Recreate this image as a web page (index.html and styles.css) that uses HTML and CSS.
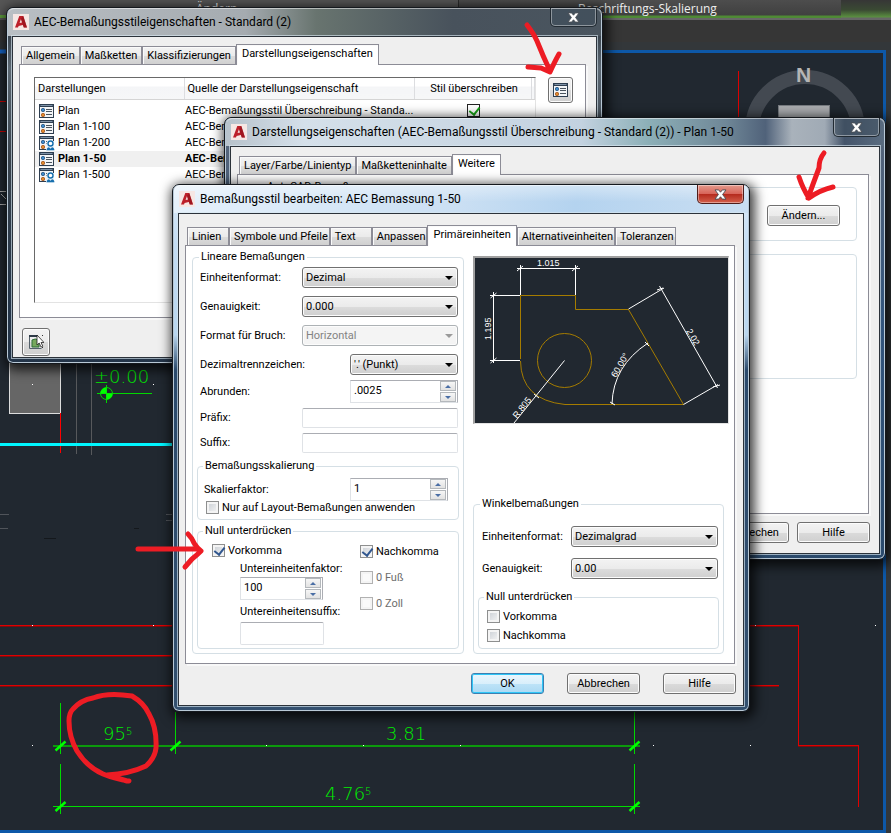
FILE: index.html
```html
<!DOCTYPE html>
<html lang="de">
<head>
<meta charset="utf-8">
<title>AEC-Bemaßungsstileigenschaften</title>
<link rel="stylesheet" href="styles.css">
</head>
<body>
<svg class="defs" width="0" height="0" aria-hidden="true">
  <symbol id="app" viewBox="0 0 16 16"><rect width="16" height="16" fill="#f6e7e4"/><path d="M2 13.500 6.300 2h4L14 13.500h-3.200l-1-2.600L5.600 12 5 13.500zM6.600 9l2.400-.6L8 5z" fill="#bd1f2a"/><path d="M8 5 10.300 2 14 13.500h-3.200z" fill="#8c1119" opacity=".6"/></symbol>
  <symbol id="close" viewBox="0 0 14 12"><path d="M1 1h4l2 2.500L9 1h4L9.300 6 13 11H9L7 8.500 5 11H1l3.700-5z" fill="#fff" stroke="#4a5057"/></symbol>
  <symbol id="list" viewBox="0 0 16 16"><rect x=".5" y="1.500" width="14" height="13" fill="#f3f5f7" stroke="#2e3e50"/><path d="M0 1h15v3H0z" fill="#2e3e50"/><path d="M1.500 2.500h12" stroke="#7f93a8"/><rect x="2.500" y="5.500" width="3" height="3" rx="1" fill="#3d8bcb" stroke="#1e4d7c"/><rect x="2.500" y="10.500" width="3" height="3" rx="1" fill="#e28a2c" stroke="#a04e13"/><path d="M7 6.500h6M7 8.500h6M7 11.500h6" stroke="#4a545e"/></symbol>
  <symbol id="user" viewBox="0 0 16 16"><use href="#list"/><path d="M7 16V11l1-5h7v10z" fill="#e9f2f8"/><circle cx="11.500" cy="8.500" r="2.500" fill="#fff" stroke="#176fae" stroke-width="1.400"/><path d="M7.500 15.300q.5-3 2.500-3l1.500 1.500 1.500-1.500q2 0 2.500 3z" fill="#176fae"/></symbol>
  <symbol id="pick" viewBox="0 0 16 16"><path d="M1.500 1v13.500h12" fill="none" stroke="#53606a"/><path d="M1 1h9v2H1z" fill="#2e3b48"/><path d="M4 6q3-2 7 0v7H4z" fill="#77a85d" stroke="#2f6f38"/><path d="M9 1v10l2.200-2 1.800 4 1.800-.8L13 8.500h3z" fill="#fff" stroke="#222" stroke-width=".8"/><path d="M14.500 1v2M14.500 13v2" stroke="#333" stroke-dasharray="1 1"/></symbol>
</svg>

<main class="desktop">
  <div class="ribbon"><span class="ribbon-left">Ändern</span><span class="ribbon-right">Beschriftungs-Skalierung</span></div>
  <div class="ribbon-gap"></div>
  <div class="canvas-frame"></div>

  <svg class="drawing" width="100%" height="100%" aria-label="Zeichnung">
    <path d="M0 15h6v3H0z" fill="#5c9a3c"/><path d="M0 51.500h6" stroke="#1565c8" stroke-width="4"/>
    <path d="M0 101.500h6M0 131.500h6" stroke="#c00"/>
    <path d="M738.500 71v50" stroke="#d00"/>
    <path d="M0 191.500h6M0 204.500h6M1 194l5 5" stroke="#aaa" fill="none"/>
    <circle cx="805" cy="130" r="53" fill="none" stroke="#434951" stroke-width="14"/>
    <rect x="778.500" y="105.500" width="51" height="51" fill="#a9abae" stroke="#777b80"/>
    <text class="compass" x="796" y="82">N</text>
    <rect x="9.500" y="330" width="51" height="83.500" fill="#666" stroke="#ddd"/>
    <path d="M60.500 413v40" stroke="#f00"/>
    <path d="M76.500 363v91M91.500 363v92" stroke="#57595c"/>
    <path d="M0 444.500h172" stroke="#00f6ff" stroke-width="3"/>
    <g stroke="#00d800" fill="none"><path d="M97 393.500h55"/><circle cx="106.500" cy="393.500" r="6"/><path d="M106.500 385v18"/></g>
    <path d="M106.500 393.500v-6a6 6 0 0 0-6 6zM106.500 393.500v6a6 6 0 0 0 6-6z" fill="#0f0"/>
    <text class="cad" x="94" y="383">±0.00</text>
    <path d="M0 514.500h9M0 528.500h8M166 514.500h6M166 520.500h6" stroke="#50545a"/>
    <path d="M44 538.500h12M134 528.500h5" stroke="#14181c"/>
    <g fill="#e00000"><rect x="0" y="625" width="799" height="1"/><rect x="0" y="655" width="172" height="1"/><rect x="0" y="685" width="779" height="1"/><rect x="798" y="625" width="1" height="121"/><rect x="798" y="745" width="61" height="1"/><rect x="858" y="745" width="1" height="62"/></g>
    <g fill="#7a0c10"><rect x="0" y="626" width="798" height="1"/><rect x="0" y="656" width="172" height="1"/><rect x="0" y="686" width="779" height="1"/><rect x="798" y="746" width="60" height="1"/></g>
    <path d="M53 746h587" stroke="#0c9a0c" stroke-width="2"/>
    <path d="M53 806.500h587" stroke="#0d0"/>
    <path d="M60.500 703v51M175.500 712v42M634.500 712v42M60.500 764v50M634.500 764v50" stroke="#00d800"/>
    <path d="m55.500 750.500 10-9M170.500 750.500l10-9M629.500 750.500l10-9M55.500 811l10-9M629.500 811l10-9" stroke="#0f0" stroke-width="2.500"/>
    <text class="cad" x="103" y="740">95<tspan class="sup" dy="-5">5</tspan></text>
    <text class="cad" x="386" y="740">3.81</text>
    <text class="cad" x="325" y="800">4.76<tspan class="sup" dy="-5">5</tspan></text>
    <path d="M32 384.500h1M153 384.500h1M32 625.500h1M153 625.500h1M755 625.500h1M875 625.500h1M32 745.500h1M266 745.500h1M363 745.500h1M460 745.500h1M653 745.500h1M750 745.500h1" stroke="#fff"/>
  </svg>

  <section class="window win-style" aria-label="AEC-Bemaßungsstileigenschaften">
    <header class="titlebar dark"><svg class="app"><use href="#app"/></svg><h2>AEC-Bemaßungsstileigenschaften - Standard (2)</h2><button class="close" aria-label="Schließen"><svg><use href="#close"/></svg></button></header>
    <div class="client">
      <nav class="tabs"><button>Allgemein</button><button>Maßketten</button><button>Klassifizierungen</button><button class="on">Darstellungseigenschaften</button></nav>
      <div class="panel style-panel">
        <div class="listbox">
          <table>
            <thead><tr><th class="c1">Darstellungen</th><th class="c2">Quelle der Darstellungseigenschaft</th><th class="c3">Stil überschreiben</th><th></th></tr></thead>
            <tbody>
              <tr><td><svg class="ico"><use href="#list"/></svg>Plan</td><td>AEC-Bemaßungsstil Überschreibung - Standa...</td><td class="mid"><input class="green" type="checkbox" checked aria-label="Plan überschreiben"></td><td></td></tr>
              <tr><td><svg class="ico"><use href="#list"/></svg>Plan 1-100</td><td>AEC-Bemaßungsstil Überschreibung - Standa...</td><td></td><td></td></tr>
              <tr><td><svg class="ico"><use href="#user"/></svg>Plan 1-200</td><td>AEC-Bemaßungsstil Überschreibung - Standa...</td><td></td><td></td></tr>
              <tr class="current"><td><svg class="ico"><use href="#list"/></svg>Plan 1-50</td><td>AEC-Bemaßungsstil</td><td></td><td></td></tr>
              <tr><td><svg class="ico"><use href="#user"/></svg>Plan 1-500</td><td>AEC-Bemaßungsstil Überschreibung - Standa...</td><td></td><td></td></tr>
            </tbody>
          </table>
        </div>
        <button class="btn tool" aria-label="Darstellungseigenschaften bearbeiten"><svg class="ico"><use href="#list"/></svg></button>
      </div>
      <div class="footer-left"><button class="btn tool" aria-label="Objekt wählen"><svg class="ico"><use href="#pick"/></svg></button></div>
    </div>
  </section>

  <section class="window win-display" aria-label="Darstellungseigenschaften">
    <header class="titlebar mixed"><svg class="app"><use href="#app"/></svg><h2>Darstellungseigenschaften (AEC-Bemaßungsstil Überschreibung - Standard (2)) - Plan 1-50</h2><button class="close" aria-label="Schließen"><svg><use href="#close"/></svg></button></header>
    <div class="client">
      <nav class="tabs"><button>Layer/Farbe/Linientyp</button><button>Maßketteninhalte</button><button class="on">Weitere</button></nav>
      <div class="panel display-panel">
        <fieldset class="change"><legend>AutoCAD-Bemaßung</legend><button class="btn">Ändern...</button></fieldset>
        <fieldset class="plain"></fieldset>
      </div>
      <div class="footer"><button class="btn">Abbrechen</button><button class="btn">Hilfe</button></div>
    </div>
  </section>

  <section class="window win-edit" aria-label="Bemaßungsstil bearbeiten">
    <header class="titlebar light"><svg class="app"><use href="#app"/></svg><h2>Bemaßungsstil bearbeiten: AEC Bemassung 1-50</h2><button class="close red" aria-label="Schließen"><svg><use href="#close"/></svg></button></header>
    <div class="client">
      <nav class="tabs snug"><button>Linien</button><button>Symbole und Pfeile</button><button>Text</button><button>Anpassen</button><button class="on">Primäreinheiten</button><button>Alternativeinheiten</button><button>Toleranzen</button></nav>
      <div class="panel edit-panel">
        <fieldset class="linear">
          <legend>Lineare Bemaßungen</legend>
          <div class="row"><label for="fmt">Einheitenformat:</label><span class="combo"><select id="fmt"><option>Dezimal</option></select></span></div>
          <div class="row"><label for="prec">Genauigkeit:</label><span class="combo"><select id="prec"><option>0.000</option></select></span></div>
          <div class="row"><label for="frac">Format für Bruch:</label><span class="combo off"><select id="frac" disabled><option>Horizontal</option></select></span></div>
          <div class="row tight"><label for="sep">Dezimaltrennzeichen:</label><span class="combo narrow"><select id="sep"><option>'.' (Punkt)</option></select></span></div>
          <div class="row tight"><label for="rnd">Abrunden:</label><span class="spin narrow"><input id="rnd" value=".0025"><button class="up" aria-label="Mehr"></button><button class="down" aria-label="Weniger"></button></span></div>
          <div class="row tight"><label for="pre">Präfix:</label><input class="text" id="pre"></div>
          <div class="row tight"><label for="suf">Suffix:</label><input class="text" id="suf"></div>
          <fieldset class="scale">
            <legend>Bemaßungsskalierung</legend>
            <div class="scale-row"><label for="sc">Skalierfaktor:</label><span class="spin"><input id="sc" value="1"><button class="up" aria-label="Mehr"></button><button class="down" aria-label="Weniger"></button></span></div>
            <label class="check"><input type="checkbox">Nur auf Layout-Bemaßungen anwenden</label>
          </fieldset>
          <fieldset class="zero">
            <legend>Null unterdrücken</legend>
            <div class="zero-left">
              <label class="check"><input type="checkbox" checked>Vorkomma</label>
              <div class="sub">
                <label for="uf">Untereinheitenfaktor:</label>
                <span class="spin"><input id="uf" value="100"><button class="up" aria-label="Mehr"></button><button class="down" aria-label="Weniger"></button></span>
                <label class="suffix" for="us">Untereinheitensuffix:</label>
                <input class="text tall" id="us">
              </div>
            </div>
            <div class="zero-right">
              <label class="check"><input type="checkbox" checked>Nachkomma</label>
              <label class="check off"><input type="checkbox" disabled>0 Fuß</label>
              <label class="check off"><input type="checkbox" disabled>0 Zoll</label>
            </div>
          </fieldset>
        </fieldset>
        <div class="right-col">
          <svg class="preview" viewBox="475 258 253 165" aria-label="Vorschau">
            <g fill="none" stroke="#a57c00"><path d="M520.500 359V295.500h55V309.500h53L683.500 404.500H565Q521 400 520.500 361"/><circle cx="564.500" cy="360.500" r="27"/></g>
            <g fill="none" stroke="#fff"><path d="M520.500 295V265M575.500 295V265M517 268.500h63M572 271l6-5M517 271l6-5M520 295.500H490M520 360.500H490M493.500 292v71M490.500 298l6-5M490.500 363l6-5M628.500 309 664 288M683.500 404.500 718 384.500M659.500 286 717.500 388M657 290l6-2M713 387l7-2M564.500 360.500 514 423M612 404q1-38 36-61M645 342l4 4M610 402l5 3M534 394l5 4"/></g>
            <g class="dim"><text x="537" y="266">1.015</text><text transform="translate(491 340) rotate(-90)">1.195</text><text transform="translate(686 331) rotate(60)">2.02</text><text transform="translate(616 378) rotate(-60)">60.00°</text><text transform="translate(517 419) rotate(-52)">R.805</text></g>
          </svg>
          <fieldset class="angle">
            <legend>Winkelbemaßungen</legend>
            <div class="row"><label for="af">Einheitenformat:</label><span class="combo"><select id="af"><option>Dezimalgrad</option></select></span></div>
            <div class="row"><label for="ap">Genauigkeit:</label><span class="combo"><select id="ap"><option>0.00</option></select></span></div>
            <fieldset class="angle-zero">
              <legend>Null unterdrücken</legend>
              <label class="check"><input type="checkbox">Vorkomma</label>
              <label class="check"><input type="checkbox">Nachkomma</label>
            </fieldset>
          </fieldset>
        </div>
      </div>
      <div class="footer wide"><button class="btn default">OK</button><button class="btn">Abbrechen</button><button class="btn">Hilfe</button></div>
    </div>
  </section>

  <svg class="marks" width="100%" height="100%" aria-hidden="true">
    <g fill="none" stroke="#ed1c24" stroke-width="5" stroke-linecap="round" stroke-linejoin="round">
      <path d="M527 25q7 9 10 16 6 15 13 30M528 67l13 1 9 4q5-11 9-18"/>
      <path d="M824 153q-5 6-5 15-6 16-11 30M799 177q4 12 10 21 11-8 24-11"/>
      <path d="M138 549h60M188 534q4 4 6 9 3 5 7 8-4 4-9 8l-7 8"/>
      <path d="M129 781q-14-2-26-7-16-7-26-23-8-14-8-30 0-8 4-12 8-9 20-11 15-6 39-2 12 7 17 18 8 14 7 34-1 10-10 18-17 8-39 9l20 6"/>
    </g>
  </svg>
</main>
</body>
</html>
```
FILE: styles.css
```css
* { box-sizing: border-box; }
body { margin: 0; background: #212830; color: #000; font: 11px/14px Roboto, "Liberation Sans", sans-serif; }
button, input, select { font: inherit; color: inherit; }
fieldset { margin: 0; padding: 0; min-width: 0; border: 1px solid #d5dfe5; border-radius: 4px; }
legend { margin-left: 5px; padding: 0 2px; line-height: 14px; }
svg { display: block; }
.defs { position: absolute; }

.desktop { position: relative; min-height: 100vh; overflow: hidden; display: flex; flex-direction: column; }
.ribbon { display: flex; height: 20px; background: linear-gradient(#363636, #3a4a33 10px, #5a8f40 17px, #666 18px); color: #eee; font: 12px/18px "Open Sans", sans-serif; }
.ribbon-left { padding-left: 196px; width: 459px; border-right: 1px solid #2a2a2a; background: #565656; }
.ribbon-right { flex: 1; padding-left: 119px; margin-right: 50px; background: linear-gradient(#4d4d4d, #404040 15px, #4f8a35 16px, #4f8a35 18px, #666 18px); }
.ribbon-gap { height: 30px; background: #363636; border-bottom: 5px solid #4c4c4c; }
.canvas-frame { flex: 1; border: 3px solid #0d58a8; border-left: 0; margin-right: 5px; box-shadow: 0 0 0 8px #33373a; }
.drawing, .marks { position: absolute; inset: 0; pointer-events: none; }
.cad { fill: #00f000; font: 200 18px "DejaVu Sans", sans-serif; }
.sup { font-size: 10px; }
.compass { fill: #b5b5b5; font: bold 21px "Liberation Sans", sans-serif; }

.window { position: absolute; border: 1px solid #14181d; border-radius: 7px; padding: 0 5px 5px; box-shadow: inset 0 0 0 1px #b9c9d6, 2px 3px 12px 3px rgba(0,0,0,.75); }
.win-style { left: 6px; top: 7px; width: 597px; background: linear-gradient(#6b747c, #3c4650 28px, #5b6873 60px, #39434d 150px, #243549 300px); }
.win-display { left: 224px; top: 117px; width: 662px; background: linear-gradient(#5f6f80, #52637a 40px, #33557d 200px, #2b4a6c); }
.win-edit { left: 172px; top: 184px; width: 578px; background: linear-gradient(#dcebf9, #c4ddf4 60px, #b9d6ef 150px, #2b4a6c 185px, #33506f); }
.titlebar { display: flex; align-items: center; height: 28px; margin: 0 -4px; padding-left: 5px; border-radius: 6px 6px 0 0; box-shadow: inset 0 1px 0 rgba(255,255,255,.5); }
.titlebar h2 { flex: 1; margin: 0 0 0 5px; font: 12px/18px Roboto, "Segoe UI", sans-serif; white-space: nowrap; }
.titlebar.dark { background: linear-gradient(90deg, #b9bfc4, #a5abb0 40%, #68746f 52%, #48525c 75%, #4a555f); }
.titlebar.mixed { background: linear-gradient(90deg, #b7c2cb, #d5e0ea 12%, #c3d2e0 54%, #8db0b8 64%, #6f8797 76%, #50627a 82%, #a9b2bb 86%, #a0aab5 91%, #44546a 94%, #5a6c80); }
.titlebar.light { background: linear-gradient(rgba(255,255,255,.4), transparent 60%), linear-gradient(100deg, #e6f1fb, #cadff3 50%, #b4d3ef 70%, #c9def2); }
.app { width: 16px; height: 16px; }
.close { align-self: flex-start; display: grid; place-items: center; width: 47px; height: 19px; margin-right: 4px; padding: 0; border: 1px solid #222b33; border-top: 0; border-radius: 0 0 5px 5px; background: rgba(60,75,90,.5); box-shadow: inset 0 0 0 1px rgba(255,255,255,.4); }
.close svg { width: 13px; height: 11px; }
.close.red { background: linear-gradient(#e49a8c, #d8655a 48%, #b52b1e 52%, #d4604c); border-color: #4f1d1a; }
.client { border: 1px solid #2b323a; box-shadow: 0 0 0 1px rgba(215,230,240,.65); background: #efefef; padding: 11px 8px 11px 6px; }
.win-style .client { padding: 7px 10px 1px 6px; }
.win-display .client { padding: 7px 10px 10px 6px; }

.tabs { display: flex; align-items: flex-end; padding-left: 2px; height: 20px; }
.tabs button { height: 18px; min-width: 42px; padding: 0 4px; border: 1px solid #8c8c96; border-bottom: 0; background: linear-gradient(#f3f3f3, #ebebeb 50%, #dcdcdc 52%, #d0d0d0); text-align: left; line-height: 16px; white-space: nowrap; box-shadow: inset 1px 1px 0 #fafafa; }
.tabs.snug button { padding: 0 1px 0 4px; }
.tabs .on, .tabs.snug .on { height: 21px; margin-bottom: -1px; padding: 0 5px 2px; background: #fff; position: relative; }
.panel { border: 1px solid #8c8c96; background: #fff; box-shadow: 2px 2px 0 #f8f8f8; }
.btn { height: 21px; width: 73px; padding: 0; border: 1px solid #707070; border-radius: 3px; background: linear-gradient(#f3f3f3, #ebebeb 50%, #dadada 52%, #cfcfcf); box-shadow: inset 0 0 0 1px #fcfcfc; line-height: 18px; }
.btn.default { border-color: #3c7fb1; background: linear-gradient(#eaf6fd, #d9effb 50%, #bde3f8 52%, #aad9f3); box-shadow: inset 0 0 0 1px #2fc6f7; }
.btn.tool { display: grid; place-items: center; width: 25px; height: 26px; }
.ico { width: 16px; height: 16px; }
.footer { display: flex; justify-content: flex-end; gap: 8px; padding-top: 8px; margin-right: -1px; }
.footer.wide { gap: 23px; padding-top: 9px; }

.style-panel { display: flex; gap: 12px; height: 254px; padding: 12px 12px 14px 14px; }
.listbox { flex: 1; border: 1px solid #696969; border-right-color: #e3e3e3; border-bottom-color: #e3e3e3; overflow: hidden; }
.listbox table { width: 100%; border-collapse: collapse; table-layout: fixed; }
.listbox th { height: 21px; padding: 2px 0 0 3px; text-align: left; font-weight: normal; background: linear-gradient(#fff, #fff 8px, #f4f5f7 9px, #f6f7f8); border-right: 1px solid #dcdde0; border-bottom: 1px solid #d5d5d5; }
.c1 { width: 149px; } .c2 { width: 230px; } .c3 { width: 117px; }
.listbox .c3 { text-align: center; }
.listbox td { height: 16px; padding: 0 0 0 1px; white-space: nowrap; line-height: 16px; overflow: hidden; }
.listbox td:first-child { padding-left: 4px; }
.listbox tbody::before { content: ""; display: block; height: 3px; }
.listbox .ico { float: left; margin-right: 3px; }
.current { font-weight: bold; background: #f0f0f0; }
.listbox .mid { text-align: center; }
.footer-left { padding: 10px 0 0 3px; }
.footer-left .tool { width: 28px; height: 28px; }

.display-panel { height: 340px; padding: 5px 11px 0; }
.display-panel fieldset { margin-left: 10px; }
.change { height: 61px; display: flex; justify-content: flex-end; padding: 11px 16px 0 0; }
.plain { margin-top: 13px; height: 125px; }

.edit-panel { display: grid; grid-template-columns: 272px 256px; justify-content: space-between; padding: 4px 5px 9px 6px; }
.linear { padding: 3px 4px 4px; }
.linear > legend, .angle > legend { margin-left: 2px; }
.row { display: flex; align-items: center; justify-content: space-between; padding: 0 1px 0 3px; margin-bottom: 8px; }
.row.tight { margin-bottom: 5px; }
.combo { position: relative; width: 156px; height: 21px; }
.combo.narrow, .spin.narrow { width: 108px; }
.combo select { appearance: none; width: 100%; height: 21px; padding: 0 3px; border: 1px solid #707070; border-radius: 3px; background: linear-gradient(#f3f3f3, #ebebeb 50%, #dcdcdc 52%, #cfcfcf); box-shadow: inset 0 0 0 1px #fcfcfc; opacity: 1; }
.combo::after { content: ""; position: absolute; right: 5px; top: 9px; border: 4px solid transparent; border-top-color: #000; border-bottom: 0; }
.combo.off select { border-color: #adb2b5; background: #f4f4f4; color: #838383; }
.combo.off::after { border-top-color: #9a9a9a; }
.text { width: 156px; height: 20px; padding: 0 3px; border: 1px solid #dfe2e6; border-top-color: #abadb3; border-radius: 2px; background: #fff; }
.text.tall { width: 84px; height: 23px; }
.spin { display: grid; grid-template-columns: 1fr 16px; grid-template-rows: 10px 10px; row-gap: 1px; width: 98px; height: 23px; padding: 0 1px 0 0; border: 1px solid #dfe2e6; border-top-color: #abadb3; border-right-color: #abadb3; background: #fff; }
.spin input { grid-row: 1 / 3; width: 100%; min-width: 0; height: 18px; padding: 0 3px; border: 0; background: none; }
.spin button { display: grid; place-items: center; padding: 0; border: 1px solid #b4b8bc; background: linear-gradient(#f6f6f6, #e2e2e2); }
.spin button::before { content: ""; border: 3px solid transparent; }
.spin .up::before { border-bottom-color: #4a6ea5; border-top: 0; }
.spin .down::before { border-top-color: #4a6ea5; border-bottom: 0; }

.check { display: flex; align-items: center; gap: 3px; height: 15px; }
.check.off { color: #6d6d6d; }
input[type="checkbox"] { appearance: none; flex: none; width: 13px; height: 13px; margin: 0; border: 1px solid #8e8f8f; background: linear-gradient(135deg, #c8cdd3, #f6f6f6); box-shadow: inset 0 0 0 2px #f4f4f4; }
input[type="checkbox"]:disabled { border-color: #b1b1b1; background: #fafafa; }
input[type="checkbox"]:checked::before { content: ""; display: block; width: 5px; height: 8px; margin: 0 0 0 3px; border: solid #31578f; border-width: 0 2px 2px 0; transform: rotate(38deg); }
input.green[type="checkbox"] { display: inline-block; vertical-align: top; margin-top: 1px; border-color: #222; background: #fff; box-shadow: none; }
input.green[type="checkbox"]:checked::before { border-color: #17a017; }

.scale { padding: 5px 0; margin: 6px 0 4px; }
.scale-row { display: flex; justify-content: space-between; align-items: center; padding: 0 10px 0 6px; }
.scale .check { height: 13px; padding-left: 8px; }
.zero { display: grid; grid-template-columns: 162px 1fr; padding: 5px 0 3px; }
.zero-left { padding-left: 14px; }
.zero-right { display: flex; flex-direction: column; gap: 11px; padding-top: 1px; }
.sub { display: flex; flex-direction: column; padding: 4px 0 0 28px; }
.sub label { height: 15px; white-space: nowrap; }
.sub .suffix { height: 17px; margin-top: 5px; }
.sub .spin { width: 83px; }

.right-col { display: flex; flex-direction: column; justify-content: space-between; padding-top: 6px; }
.preview { width: 256px; height: 168px; background: #212830; border: 1px solid #e3e3e3; border-top: 2px solid #a0a0a0; border-left: 2px solid #a0a0a0; }
.dim { fill: #fff; font: 9px "Liberation Sans", sans-serif; }
.angle { margin-right: 5px; padding: 15px 4px 4px; }
.angle .combo { width: 147px; }
.angle .row { margin-bottom: 11px; padding-left: 4px; }
.angle-zero { padding: 3px 0; }
.angle-zero .check { height: 19px; padding-left: 8px; }
```
